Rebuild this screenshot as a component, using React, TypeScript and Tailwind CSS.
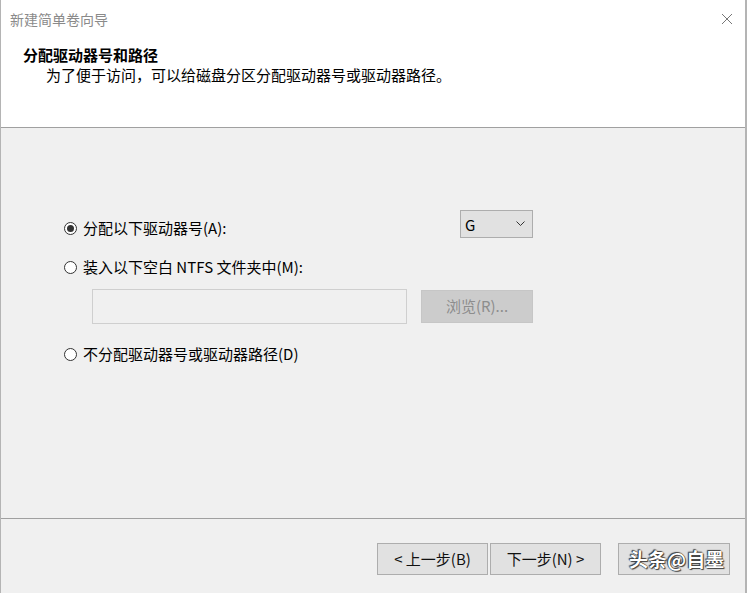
import React from "react";

const font = { fontFamily: '"Noto Sans CJK SC", "Noto Sans", sans-serif' };

function Radio({ checked }: { checked?: boolean }) {
  return (
    <span className="w-[13px] h-[13px] rounded-full border border-[#333] bg-white flex items-center justify-center shrink-0">
      {checked && <span className="w-[7px] h-[7px] rounded-full bg-[#333]" />}
    </span>
  );
}

function Button({ children, className = "" }: { children?: React.ReactNode; className?: string }) {
  return (
    <div
      className={`h-[32px] border border-[#adadad] bg-[#e1e1e1] flex items-center justify-center text-[15px] text-[#111] ${className}`}
    >
      {children}
    </div>
  );
}

export default function App() {
  return (
    <div className="w-[747px] h-[593px] bg-[#f0f0f0] flex flex-col border-r-2 border-l border-[#b4b4b4] overflow-hidden" style={font}>
      {/* header */}
      <div className="h-[128px] bg-white border-b border-[#a0a0a0] flex flex-col shrink-0">
        <div className="flex items-center justify-between pl-[9px] pr-[12px] h-[37px]">
          <span className="text-[14px] text-[#8a8a8a] leading-none">新建简单卷向导</span>
          <svg width="12" height="12" viewBox="0 0 12 12">
            <path d="M1 1L11 11M11 1L1 11" stroke="#777" strokeWidth="1" />
          </svg>
        </div>
        <div className="pl-[22px] pt-[8px] text-[15px] font-bold text-black leading-[20px]">分配驱动器号和路径</div>
        <div className="pl-[45px] text-[15px] text-black leading-[20px]">为了便于访问，可以给磁盘分区分配驱动器号或驱动器路径。</div>
      </div>

      {/* body */}
      <div className="h-[391px] shrink-0 border-b border-[#a0a0a0] flex flex-col pl-[63px] pt-[82px]">
        <div className="flex items-start">
          <div className="flex items-center gap-[6px] mt-[8px] w-[396px]">
            <Radio checked />
            <span className="text-[15px] text-black leading-[20px]">分配以下驱动器号(A):</span>
          </div>
          <div className="w-[73px] h-[28px] border border-[#adadad] bg-[#e1e1e1] flex items-center justify-between pl-[4px] pr-[7px]">
            <span className="text-[15px] text-black leading-none">G</span>
            <svg width="9" height="6" viewBox="0 0 9 6">
              <path d="M0.5 0.5L4.5 4.5L8.5 0.5" stroke="#333" strokeWidth="1" fill="none" />
            </svg>
          </div>
        </div>
        <div className="flex items-center gap-[6px] mt-[19px]">
          <Radio />
          <span className="text-[15px] text-black leading-[20px]">装入以下空白 NTFS 文件夹中(M):</span>
        </div>
        <div className="flex items-center mt-[12px] pl-[28px]">
          <div className="w-[315px] h-[35px] border border-[#cfcfcf] bg-[#f0f0f0]" />
          <div className="ml-[14px] w-[112px] h-[33px] border border-[#c6c6c6] bg-[#cccccc] flex items-center justify-center text-[15px] text-[#8d8d8d]">
            浏览(R)...
          </div>
        </div>
        <div className="flex items-center gap-[6px] mt-[20px]">
          <Radio />
          <span className="text-[15px] text-black leading-[20px]">不分配驱动器号或驱动器路径(D)</span>
        </div>
      </div>

      {/* footer */}
      <div className="flex-1 flex items-start pt-[24px] pl-[376px]">
        <Button className="w-[111px]">&lt; 上一步(B)</Button>
        <Button className="w-[111px] ml-[2px]">下一步(N) &gt;</Button>
        <div className="relative ml-[17px]">
          <Button className="w-[112px]" />
          {/* watermark laid over the cancel button */}
          <span
            className="absolute left-[11px] top-[1px] text-[19px] font-bold text-white whitespace-nowrap leading-[30px]"
            style={{ textShadow: "0 0 1px #000, 1px 1px 1px #444, -1px -1px 1px #444" }}
          >
            头条@自墨
          </span>
        </div>
      </div>
    </div>
  );
}
